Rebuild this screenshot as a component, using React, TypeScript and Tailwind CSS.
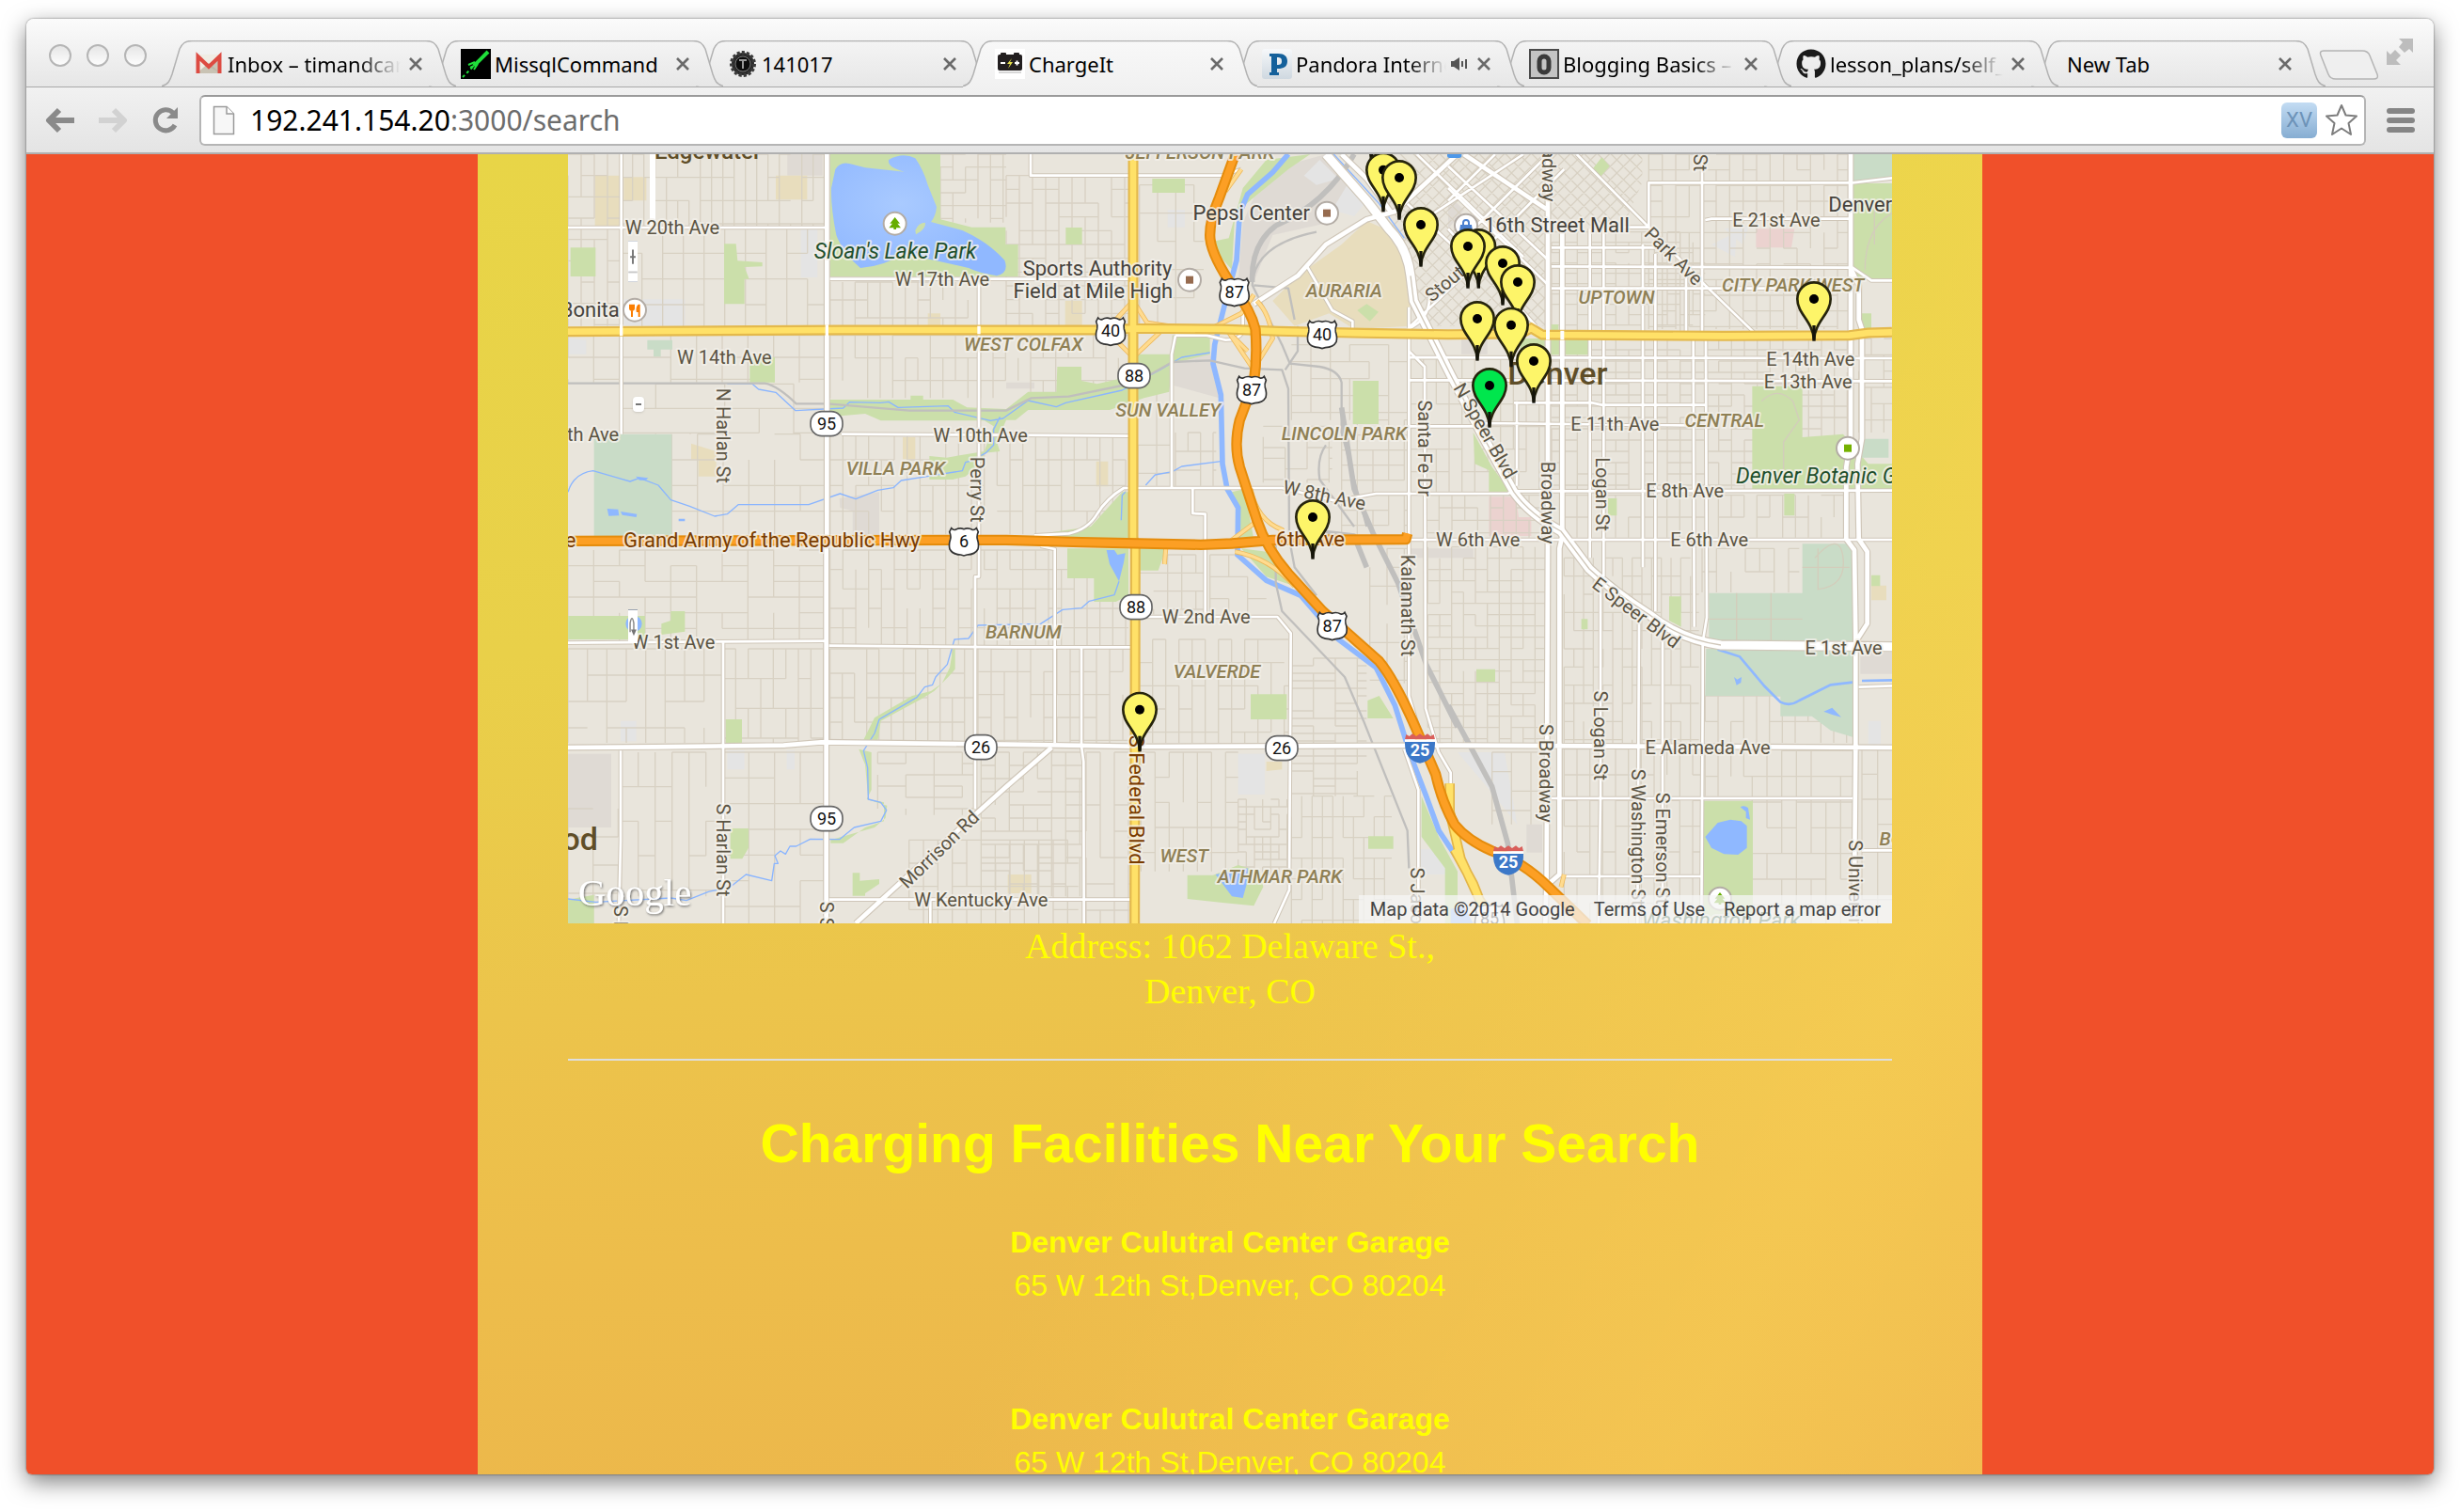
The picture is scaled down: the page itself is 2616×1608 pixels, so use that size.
import React from 'react';
import { FaGithub } from 'react-icons/fa';

/* ---------- browser chrome ---------- */

const GmailIcon = () => (
  <svg viewBox="0 0 32 32" className="h-8 w-8">
    <rect x="3" y="6" width="26" height="20" fill="#efece4" />
    <path d="M3 26 L16 15 L29 26Z" fill="#c9c3b4" />
    <path d="M16 19 L29 7 V26Z" fill="#b9b4a4" opacity=".7" />
    <path d="M4.500 26 V8 L16 19 L27.500 8 V26" fill="none" stroke="#dd4b42" strokeWidth="4" />
  </svg>
);

const MissileIcon = () => (
  <svg viewBox="0 0 32 32" className="h-8 w-8">
    <rect width="32" height="32" fill="#000" />
    <g stroke="#1fe03a" fill="none">
      <path d="M14 18 L29 3" strokeWidth="4" />
      <path d="M8 17 L15 14 M14 22 L18 16 M10 20 L14 18" strokeWidth="2" />
      <path d="M2 30 L13 19" strokeWidth="2" strokeDasharray="3 3" />
    </g>
  </svg>
);

const TuringIcon = () => (
  <svg viewBox="0 0 32 32" className="h-8 w-8">
    <circle cx="16" cy="16" r="12" fill="#2a2a2a" stroke="#3a3a3a" strokeWidth="4" strokeDasharray="3 2" />
    <circle cx="16" cy="16" r="8" fill="#0c0c0c" stroke="#777" strokeWidth="1" />
    <path d="M12 12 H20 M16 12 V21" stroke="#999" strokeWidth="2" />
  </svg>
);

const BatteryIcon = () => (
  <svg viewBox="0 0 32 32" className="h-8 w-8">
    <rect width="32" height="32" fill="#fff" />
    <rect x="6" y="4" width="6" height="3" rx="1" fill="#231f20" />
    <rect x="20" y="4" width="6" height="3" rx="1" fill="#231f20" />
    <rect x="3" y="6" width="26" height="17" rx="2" fill="#231f20" />
    <path d="M6 15 H11 M21 15 H26 M23.500 12.500 V17.500" stroke="#fff" strokeWidth="2" />
    <path d="M18 10 L13 16 H16 L14 21 L19 14 H16Z" fill="#e6e04b" />
    <rect x="4" y="24" width="24" height="2" fill="#d8d8d8" />
  </svg>
);

const PandoraIcon = () => (
  <svg viewBox="0 0 32 32" className="h-8 w-8">
    <defs>
      <linearGradient id="pandora" x1="0" y1="0" x2="0" y2="1">
        <stop offset="0" stopColor="#f6f8fa" />
        <stop offset="1" stopColor="#cfd8e0" />
      </linearGradient>
    </defs>
    <rect width="32" height="32" rx="3" fill="url(#pandora)" />
    <path d="M8 5 H17 C24 5 27 8 27 13 C27 19 23 21 17 21 H16 V25 H18 V28 H8 V25 H10 V8 H8Z M16 9 V17 C20 17 21 16 21 13 C21 10 20 9 16 9Z" fill="#14609b" fillRule="evenodd" />
  </svg>
);

const OctetIcon = () => (
  <svg viewBox="0 0 32 32" className="h-8 w-8">
    <rect x="1" y="1" width="30" height="30" fill="#c4c4c4" stroke="#4a4a4a" strokeWidth="2" />
    <rect x="11" y="8" width="10" height="17" rx="5" fill="none" stroke="#3a3a3a" strokeWidth="5" />
  </svg>
);

const SpeakerIcon = () => (
  <svg viewBox="0 0 20 16" className="h-4 w-5 shrink-0">
    <path d="M1 5 H4 L10 1 V15 L4 11 H1Z" fill="#555" />
    <path d="M13 5 V11 M17 3 V13" stroke="#555" strokeWidth="2" />
  </svg>
);

type TabInfo = { title: string; icon?: React.ReactNode; active?: boolean; audio?: boolean; fade?: boolean; z: string };

const tabs: TabInfo[] = [
  { title: 'Inbox – timandcarr', icon: <GmailIcon />, fade: true, z: 'z-[8]' },
  { title: 'MissqlCommand', icon: <MissileIcon />, z: 'z-[7]' },
  { title: '141017', icon: <TuringIcon />, z: 'z-[6]' },
  { title: 'ChargeIt', icon: <BatteryIcon />, active: true, z: 'z-[9]' },
  { title: 'Pandora Internet', icon: <PandoraIcon />, audio: true, fade: true, z: 'z-[4]' },
  { title: 'Blogging Basics – H', icon: <OctetIcon />, fade: true, z: 'z-[3]' },
  { title: 'lesson_plans/self_', icon: <FaGithub className="h-8 w-8 text-[#1b1b1b]" />, fade: true, z: 'z-[2]' },
  { title: 'New Tab', z: 'z-[1]' },
];

const TAB_EDGE = 'M0 48.500 C7 47 9 42 11 36 L19 9 C22 3 25 .5 32 .5 H281 C288 .5 291 3 294 9 L302 36 C304 42 306 47 313 48.500';

function Tab({ tab }: { tab: TabInfo }) {
  return (
    <div className={`relative h-full min-w-0 flex-1 ${tab.z}`}>
      <svg viewBox="0 0 313 50" preserveAspectRatio="none" className="absolute left-0 top-0 h-[50px] w-[calc(100%+29px)]">
        <defs>
          <linearGradient id="tabFill" x1="0" y1="0" x2="0" y2="1">
            <stop offset="0" stopColor="#f4f4f4" />
            <stop offset="1" stopColor="#e7e7e7" />
          </linearGradient>
          <linearGradient id="tabActive" x1="0" y1="0" x2="0" y2="1">
            <stop offset="0" stopColor="#f8f8f8" />
            <stop offset="1" stopColor="#f1f1f1" />
          </linearGradient>
        </defs>
        <path d={TAB_EDGE + (tab.active ? ' V50 H0Z' : 'Z')} fill={tab.active ? 'url(#tabActive)' : 'url(#tabFill)'} />
        <path d={TAB_EDGE} fill="none" stroke="#b2b2b2" strokeWidth="1.5" />
      </svg>
      <div className="relative flex h-full items-center gap-1 pl-[34px] pr-1.5">
        {tab.icon}
        <span
          className={`min-w-0 flex-1 overflow-hidden whitespace-nowrap text-[22px] leading-8 text-black ${
            tab.icon ? '' : 'pl-1'
          } ${tab.fade ? '[mask-image:linear-gradient(to_right,black_75%,transparent)]' : ''}`}
        >
          {tab.title}
        </span>
        {tab.audio && <SpeakerIcon />}
        <button aria-label={`Close ${tab.title}`} className="ml-1 h-4 w-4 shrink-0">
          <svg viewBox="0 0 16 16" className="h-4 w-4">
            <path d="M2 2 L14 14 M14 2 L2 14" stroke="#6a6a6a" strokeWidth="2.6" />
          </svg>
        </button>
      </div>
    </div>
  );
}

function TabStrip() {
  return (
    <div className="flex h-[73px] items-end bg-gradient-to-b from-[#fbfbfb] to-[#e6e6e6] shadow-[inset_0_-1px_0_#a9a9a9]">
      <div className="mb-[22px] ml-6 flex w-[120px] shrink-0 gap-4">
        {['Close window', 'Minimize window', 'Zoom window'].map((n) => (
          <button key={n} aria-label={n} className="h-6 w-6 rounded-full border-2 border-[#b5b5b5] bg-gradient-to-b from-[#e6e6e6] to-[#fdfdfd]" />
        ))}
      </div>
      <div className="flex h-[50px] max-w-[2272px] flex-1">
        {tabs.map((t) => (
          <Tab key={t.title} tab={t} />
        ))}
      </div>
      <button aria-label="New tab" className="mb-2 ml-[22px] h-8 w-16 shrink-0">
        <svg viewBox="0 0 64 32" className="h-8 w-16">
          <path d="M5 1 H46 Q52 1 54 6 L62 26 Q64 31 58 31 H18 Q12 31 10 26 L2 6 Q0 1 5 1Z" fill="#efefef" stroke="#b4b4b4" strokeWidth="1.5" />
        </svg>
      </button>
      <button aria-label="Full screen" className="mb-6 ml-2 mr-5 h-7 w-7 shrink-0">
        <svg viewBox="0 0 28 28" className="h-7 w-7" fill="#bdbdbd">
          <path d="M13 0 H28 V15 L24 11 L19 15 L13 9 L17 4Z" />
          <path d="M0 13 L4 17 L9 12 L15 18 L10 23 L15 28 H0Z" />
        </svg>
      </button>
    </div>
  );
}

function Toolbar() {
  return (
    <div className="flex h-[71px] items-center border-b-2 border-[#b0b0b0] bg-gradient-to-b from-[#f1f1f1] to-[#e4e4e4] pl-5 pr-5">
      <button aria-label="Back" className="h-8 w-8">
        <svg viewBox="0 0 32 32" className="h-8 w-8">
          <path d="M15 5 L4 16 L15 27 M5 16 H31" fill="none" stroke="#8a8a8a" strokeWidth="6" strokeLinejoin="round" />
        </svg>
      </button>
      <button aria-label="Forward" className="ml-6 h-8 w-8">
        <svg viewBox="0 0 32 32" className="h-8 w-8">
          <path d="M17 5 L28 16 L17 27 M27 16 H1" fill="none" stroke="#d2d2d2" strokeWidth="6" strokeLinejoin="round" />
        </svg>
      </button>
      <button aria-label="Reload" className="ml-6 h-8 w-8">
        <svg viewBox="0 0 32 32" className="h-8 w-8">
          <path d="M26 21 A11 11 0 1 1 24 8" fill="none" stroke="#8a8a8a" strokeWidth="5" />
          <path d="M29 2 V14 H17Z" fill="#8a8a8a" />
        </svg>
      </button>
      <div className="ml-5 flex h-[54px] flex-1 items-center rounded-md border-2 border-[#b5b5b5] border-t-[#9a9a9a] bg-white pl-3 pr-1.5">
        <svg viewBox="0 0 24 32" className="h-8 w-6">
          <path d="M1.500 1.500 H15 L22.500 9 V30.500 H1.500Z" fill="#f7f7f7" stroke="#9b9b9b" strokeWidth="1.5" />
          <path d="M15 1.500 V9 H22.500" fill="#fff" stroke="#9b9b9b" strokeWidth="1.5" />
        </svg>
        <a href="#search" className="ml-4 flex-1 text-[30px] leading-9 text-black">
          192.241.154.20<span className="text-[#6d6d6d]">:3000/search</span>
        </a>
        <button className="h-[38px] w-[38px] rounded-md bg-gradient-to-b from-[#c3dcf3] to-[#86add2] font-[Roboto] text-[22px] leading-9 text-[#6d93b8]">XV</button>
        <button aria-label="Bookmark" className="ml-2 h-9 w-9">
          <svg viewBox="0 0 36 36" className="h-9 w-9">
            <path d="M18 2 L22.500 12.500 L34 13.500 L25.500 21 L28 33 L18 26.500 L8 33 L10.500 21 L2 13.500 L13.500 12.500Z" fill="#fff" stroke="#7d7d7d" strokeWidth="2" strokeLinejoin="round" />
          </svg>
        </button>
      </div>
      <button aria-label="Menu" className="ml-[22px] flex flex-col gap-1">
        <span className="h-1.5 w-[30px] rounded-sm bg-[#858585]" />
        <span className="h-1.5 w-[30px] rounded-sm bg-[#858585]" />
        <span className="h-1.5 w-[30px] rounded-sm bg-[#858585]" />
      </button>
    </div>
  );
}

/* ---------- map ---------- */

// Neighbourhood street grids: x0, y0, x1, y1, block width, block height
const blocks: number[][] = [
  [12, 12, 182, 560, 42, 68], [182, 12, 838, 246, 36, 74], [182, 246, 838, 560, 66, 82], [848, 420, 1323, 560, 40, 57],
  [1200, 12, 1410, 230, 40, 41], [1410, 80, 1800, 560, 42, 44], [12, 590, 838, 740, 82, 70], [182, 745, 838, 905, 110, 78],
  [848, 590, 1800, 790, 40, 72], [343, 905, 838, 1230, 82, 82], [848, 905, 1810, 1225, 41, 82], [1835, 110, 2040, 560, 58, 90],
  [1830, 760, 1940, 1070, 60, 90], [1950, 900, 2080, 1070, 40, 60], [12, 1275, 838, 1565, 82, 50], [848, 1275, 1800, 1580, 41, 62],
  [12, 1590, 507, 1890, 62, 84], [507, 1590, 838, 1890, 40, 95], [848, 1590, 1310, 1890, 39, 78], [1320, 1590, 1810, 1890, 42, 73],
  [182, 1920, 507, 2380, 54, 110], [507, 1920, 838, 2466, 82, 82], [1000, 1920, 1310, 2120, 90, 36], [1330, 1920, 1650, 2380, 45, 42],
  [1100, 2200, 1640, 2466, 46, 74], [1665, 1920, 1815, 2466, 45, 84], [12, 2100, 180, 2466, 80, 90], [1835, 1290, 2045, 1480, 45, 58],
  [1835, 1560, 2310, 1890, 42, 74], [1840, 1920, 2150, 2300, 45, 80], [2150, 2070, 2310, 2330, 26, 24], [2320, 1620, 2560, 2060, 70, 24],
  [2320, 2060, 2640, 2466, 33, 66], [2060, 1290, 2240, 1480, 60, 70], [2230, 880, 2450, 1060, 70, 34], [2320, 620, 2690, 860, 62, 54],
  [2480, 860, 2690, 1230, 50, 48], [2700, 665, 3140, 1090, 41, 72], [3150, 260, 3640, 575, 41, 33], [3460, 12, 4100, 570, 43, 50],
  [3150, 600, 4100, 1080, 41, 36], [2750, 1100, 3130, 1235, 41, 40], [3190, 1100, 4090, 1235, 41, 70], [4130, 600, 4236, 900, 40, 52],
  [2755, 1265, 3130, 1890, 38, 36], [3190, 1300, 3620, 1890, 31, 58], [3630, 1270, 3940, 1410, 46, 74], [3640, 1740, 4110, 1890, 41, 82],
  [3190, 1910, 3630, 2466, 41, 82], [3790, 1915, 4110, 2466, 47, 82], [4140, 1910, 4236, 2466, 50, 80], [3640, 1915, 3790, 2060, 41, 82],
  [2960, 1920, 3130, 2150, 62, 62], [2570, 1270, 2690, 1700, 55, 60],
];

function gridPath(): string {
  let seed = 7;
  const rnd = () => {
    seed = (seed * 16807) % 2147483647;
    return seed / 2147483647;
  };
  let d = '';
  for (const [x0, y0, x1, y1, dx, dy] of blocks) {
    for (let x = x0; x < x1; x += dx)
      for (let y = y0; y < y1; y += dy) {
        if (rnd() > 0.15) d += `M${x} ${y}V${Math.min(y + dy, y1)}`;
        if (rnd() > 0.3) d += `M${x} ${y}H${Math.min(x + dx, x1)}`;
      }
  }
  return d;
}

const downtownPath = (step: number, from: number, to: number) => {
  let d = '';
  for (let c = from; c < to; c += step) d += `M${c} -200L${c + 900} 700M${c + 1300} -200L${c + 400} 700`;
  return d;
};

const parks = [
  'M848 12H1200V220L1300 245H1408V300H1440V402H848Z',
  'M20 310H100V402H20Z', 'M510 298H548L553 352L632 357V370L575 372L590 410H575V490H510Z', 'M592 660H672V740H592Z',
  'M848 795H1105V782H1145V795H1240L1285 820L1410 825L1480 770L1570 770L1573 690H1650V735L1700 745L1810 720V650H1940V590H2060V650L1940 680L1930 770L1850 790L1740 828L1480 828L1440 860H1410L1380 930L1390 960L1340 965L1330 1000L1280 1040L1240 1050L1165 1050V975L1220 980L1340 960L1370 880L1340 862H1010L960 840L848 850Z',
  'M1876 90H1980V135H1876Z', 'M1600 246H1652V300H1600Z', 'M1410 300H1448V402H1410Z', 'M2165 120L2240 30L2380 12L2310 60L2200 150L2140 200L2130 380L2085 330L2070 290L2120 280Z',
  'M2516 735H2598V873H2516Z', 'M2530 510L2560 490L2598 515L2570 545Z', 'M1510 1225L1680 1200L1780 1090H1808V1240H1510Z',
  'M1605 1270H1800V1420L1760 1440H1690V1365H1605Z', 'M1835 1270H1920L1895 1340H1835Z', 'M12 1485H258V1560H12Z', 'M340 1470H385V1535L310 1545V1510L340 1500Z',
  'M1240 1590L1230 1650L1205 1700L1170 1725L1110 1740L990 1810L955 1880L1000 1885L1010 1820L1140 1750L1180 1725L1225 1680L1247 1655V1590Z',
  'M940 1910L980 1920V2040L965 2070L1030 2090L1025 2130L990 2160L850 2200L850 2210L890 2210L960 2160L1020 2140V2080L970 2070L960 1960Z',
  'M515 1815H567V1890H515Z', 'M530 2163H588V2225L568 2260H530Z', 'M920 2305H943V2330L1005 2325V2340L960 2370V2378H920Z', 'M12 2390L95 2375V2466H12Z',
  'M2190 1735H2305V1815H2190Z', 'M2563 1755L2600 1740L2645 1812H2563Z', 'M2565 2188H2645V2228H2565Z', 'M1988 2312H2070L2150 2280L2220 2300L2230 2350L2200 2410L2100 2400L1988 2388Z',
  'M2735 2060L2790 2190L2850 2300V2466H2810V2290L2735 2190Z', 'M2900 900L2960 1010L3020 1090H2950V1020L2905 1000Z', 'M3050 600H3268V652H3050Z',
  'M3148 555H3172V650H3148Z', 'M3280 60L3310 22L3335 50L3300 90Z', 'M3790 752H3950V915L4080 905L4160 1000H4236V1080H3790Z', 'M4110 105H4236V410H4130L4110 370Z',
  'M4130 520H4170V570H4130Z', 'M3892 1095H3925V1165H3892Z', 'M3525 1423H3563V1520L3525 1500Z', 'M3330 1110H3358V1165H3330Z', 'M2910 1655H2970V1695H2910Z', 'M3245 1495H3265V1528H3245Z',
  'M3635 2075H3792V2466H3635Z', 'M2130 1090L2170 1080L2200 1240H2150L2148 1140Z', 'M2160 1270L2240 1280L2330 1390L2240 1360Z', 'M4170 1355H4198V1390H4170Z',
];
const cemeteries = ['M95 905H343V1230H95Z', 'M4110 12H4236V90L4110 105Z', 'M3950 1255H4110V1565H3652V1412H3950Z', 'M3643 1590H4112V1872L4040 1850L3980 1805H3880V1740H3640Z', 'M4130 920H4225V980H4130Z', 'M265 605H345V635H308V658H285V635H265Z'];
const tans = ['M98 80H176V240H98Z', 'M190 85H262V160H190Z', 'M675 80H775V157H675Z', 'M405 935L485 960V1040H428V985H405Z', 'M1080 915H1120V985H1080Z', 'M1598 480H1652V560H1598Z', 'M2340 400L2480 300L2560 225L2640 260L2690 340L2700 560L2520 570L2440 520L2330 560L2260 480Z', 'M1697 992H1735V1072H1697Z', 'M1415 2310H1490V2370H1415Z', 'M1160 520H1200V560H1160Z', 'M2240 1950H2290V1975L2240 1980Z', 'M4170 1388H4218V1435H4170Z'];
const greys = ['M712 12H824V80H712Z', 'M1945 670L2060 640L2090 790L1945 750Z', 'M2200 150L2330 40L2430 12L2520 80L2440 230L2260 270L2200 420L2150 420L2165 230Z', 'M878 1110L1005 1090V1230H920V1150L880 1140Z', 'M12 1925H150V2160H12Z', 'M4135 1600H4236V1670H4135Z', 'M2862 590H2945V650H2862Z', 'M2820 140L2870 190L2820 250Z', 'M2700 1270L2900 1270L2900 1300H2700Z', 'M3070 2150H3120V2240H3070Z', 'M1410 740H1500V760H1410Z'];
const lights = ['M190 475H385V560H190Z', 'M755 252H808V405H755Z', 'M12 600L70 605V650H12Z', 'M2360 80L2410 30L2470 90L2400 110Z', 'M2510 90L2570 150L2520 210L2450 190Z', 'M2150 1925H2235V2055H2150Z', 'M2850 1920H3000L3040 2150L2960 2050Z', 'M180 1820H230V1885H180Z', 'M520 1915H575V1975H520Z', 'M710 1915H735V1975H710Z', 'M2720 2230H2815V2310H2720Z', 'M4160 1820H4200V1900H4160Z', 'M3660 300L3740 260L3735 340Z', 'M3700 250L3780 240L3760 300Z', 'M1925 190H1980V245H1925Z', 'M2440 380L2480 420L2460 440L2420 400Z'];
const reds = ['M3802 250H3925L3915 310H3802Z', 'M2950 1105H3035L3045 1170H3085V1230H2950Z'];

const streams = [
  'M520 745H600L620 762L675 772L738 830L890 822L910 803L1010 805L1035 802L1065 820L1225 815L1245 835L1360 862L1400 855L1480 798L1570 818L1600 805L1780 765L1900 700L1970 660L2060 645',
  'M12 1090Q30 1030 92 1022L210 1056L240 1045L300 1068L340 1115L400 1135L480 1167L520 1160L555 1130L780 1130L880 1095L930 1112L1000 1084L1050 1076L1075 1053L1270 1022L1280 995L1300 990L1345 965L1370 940L1370 890L1390 850',
  'M1770 1375L1755 1418L1675 1438L1650 1460L1590 1465L1520 1510L1320 1515L1290 1557L1245 1560L1222 1640L1185 1680L1175 1705L1150 1712L1125 1745L1005 1815L990 1860L955 1915L968 1970L970 2070L1010 2080L1028 2105L1010 2140L925 2160L878 2198L785 2197L740 2220L720 2220L706 2245L690 2235L672 2250L682 2275L670 2275L662 2330L580 2310L530 2350L460 2365L390 2393L340 2385L100 2398L12 2388',
  'M1855 1068L1885 1035L1940 1025L1970 1008L2095 992', 'M1790 1090L1780 1100L1777 1180', 'M2455 12L2600 170L2680 280',
];
const lakes = [
  'M228 1040L268 1045L260 1052L240 1052Z', 'M137 1143L172 1145L175 1165L142 1166Z', 'M180 1152L232 1160L230 1170L185 1163Z', 'M365 1175H385V1183H365Z',
  'M1730 1275L1755 1275L1765 1290L1790 1285L1785 1315L1770 1375L1740 1320Z', 'M2078 2310L2180 2290L2180 2330L2165 2385L2130 2380Z', 'M3640 2190L3680 2145L3720 2135L3755 2140L3773 2155V2225L3745 2247L3700 2245L3660 2225Z',
  'M3752 2095Q3765 2088 3777 2098L3783 2135L3770 2130L3770 2110Z', 'M3732 1680L3742 1688L3756 1680L3754 1698L3740 1706Z', 'M4018 1790L4045 1778L4074 1808L4045 1800Z', 'M196 1510A26 26 0 0 1 248 1510A26 26 0 0 1 196 1510Z', 'M2828 2420L2870 2410L2900 2466H2828Z',
];

const rails = [
  'M12 743H640Q680 750 740 808H840L1100 830H1410L1490 790L1610 785L1780 750L1870 715L1940 675L2060 670L2170 695L2290 700L2310 760L2313 1240L2330 1330L2400 1420',
  'M2400 260Q2200 300 2195 430L2290 620L2315 680L2410 690Q2470 700 2480 740V900L2560 1200',
  'M2270 1260V1380L2290 1470L2490 1680L2550 1820L2690 2170L2695 2290', 'M2340 560V640L2300 700', 'M2200 430L2310 440L2330 540', 'M2430 940Q2400 980 2410 1050L2520 1200',
];
const thickRails = ['M2520 12Q2430 170 2270 240Q2190 300 2195 420', 'M2480 820L2520 1080L2580 1220L2660 1380L2750 1640L2850 1840', 'M2820 1770L2960 2030L3010 2210L3040 2466', 'M2430 1220L2520 1230L2560 1330'];

const minor = [
  'M182 12V905', 'M12 246H835', 'M848 410H1805', 'M1323 420V1360H1311V2100', 'M885 905L1440 908L1810 911', 'M1488 12V80H2100L2160 60', 'M180 1915V2200L174 2466',
  'M2370 370L2450 510L2515 545V575', 'M1950 590H2050L2110 605Q2150 605 2165 580V510', 'M1950 590L1938 650V1075', 'M1500 1228L1610 1222Q1670 1210 1700 1160T1785 1077H2290L2460 1118L2590 1095H3010L3030 1087L4236 1085',
  'M2005 1077V1158L2045 1160V1488', 'M1830 1488H2275L2318 1540L2313 2360L2265 2466', 'M2695 500V1740L2730 1860', 'M2695 640L2745 690L2748 1780L2790 1920L2828 1985V2040', 'M2680 1910L2725 2040V2466',
  'M2695 660L4236 663', 'M2695 733L4236 736', 'M2695 880L2900 880L2930 870L3650 878', 'M3030 805H3280L3310 812H3640', 'M12 1571L380 1568L835 1565', 'M845 1580L1440 1585H1810', 'M507 1570V2466', 'M845 2390H1810', 'M1168 2390V2466',
  'M1520 1262L1565 1272V1890', 'M1650 1584V1900L1657 1950L1658 2466', 'M3272 250V1300', 'M3316 250V1360', 'M3441 300V1330', 'M3481 330V1470', 'M3579 380V580', 'M3630 12V580', 'M3602 600L3605 1520', 'M3642 600L3645 1490L3632 1570V1740L3628 2466',
  'M3460 245V103H4110L4236 88', 'M3380 245H3460', 'M3150 310H3480', 'M3150 370L4110 374L4170 415H4236', 'M3150 440H3920', 'M3640 222L3660 218H4100', 'M3230 12L3460 245L3640 430L3795 580', 'M2690 1242H4236', 'M3306 1360V2060L3300 2466', 'M3429 1510L3424 2466', 'M3504 1550V2466',
  'M3150 2067H4110', 'M3180 2316H3628', 'M4140 2233H4236', 'M4236 1708L4130 1712', 'M3039 800V1070', 'M2820 120L3140 430', 'M2820 50L3140 350', 'M2820 250L3100 560', 'M3190 60L2960 290', 'M3140 12L2880 270', 'M3060 12L2700 250', 'M2970 12L2820 160', 'M2690 170L2820 290L2900 370L2700 560', 'M2720 12L3060 340', 'M2830 420L2760 470Q2760 540 2690 570',
];
const major = ['M838 12V1225L836 1270V2466', 'M12 1905L290 1903L700 1898L820 1888L1410 1895L1870 1902L2820 1898L4236 1905', 'M3138 12V1230L3134 2310L3130 2466', 'M3184 240V1230L3175 1270V2310L3140 2340', 'M4104 12V920L4090 1010V1240L4116 1275L4120 1550V1900L4115 2466', 'M4104 375L4130 430V540L4140 570V920L4126 1000L4130 1240L4157 1280V1510L4125 1560', 'M930 2466L1310 2120L1410 2030L1555 1905', 'M2200 490L2340 400L2430 300L2560 220L2650 195L2710 140L2840 20', 'M2870 12L3138 190', 'M2480 12L2560 90L2640 200'];
const speer = 'M2430 12L2560 160L2630 250Q2690 310 2700 400L2710 480L2830 720L2930 910L3030 1090Q3080 1160 3180 1215L3270 1335Q3350 1410 3460 1480Q3560 1560 3690 1578L4236 1583';
const colfax = 'M12 578L880 573H1690L1830 568L2100 570L2280 577L2550 583L2820 587L3050 585L3085 567L3120 588L3700 592L4100 590L4160 582L4236 580';
const federal = 'M1815 12V1235L1822 1270L1820 2466';
const sixth = 'M12 1246L1410 1243L1650 1250L2030 1258L2130 1254L2260 1243L2685 1241L2690 1222';
const i25 = 'M2140 12L2090 150Q2060 220 2060 270Q2060 330 2140 445Q2190 510 2205 570Q2212 660 2200 740L2155 860Q2135 940 2155 1010L2210 1180Q2240 1270 2310 1350L2420 1470L2600 1630Q2650 1690 2720 1850L2780 1990Q2800 2080 2840 2150Q2880 2200 2960 2235Q3060 2270 3140 2350L3265 2470';
const platte = 'M2310 12L2260 70L2180 140L2155 200L2145 350L2110 480L2075 620L2070 680L2095 780L2100 1000L2115 1080L2150 1140L2148 1290L2240 1372L2350 1420L2470 1560L2590 1650L2650 1770L2700 1930L2750 2060L2790 2170L2850 2260L2950 2430';
const ramps = ['M1815 480L1760 540L1690 575M1815 480L1860 550L1960 565M1740 585L1815 660L1900 580M2060 570L2160 520L2200 460M2120 580L2200 700M2180 640L2120 580M2210 480Q2250 520 2260 600L2210 680M2160 60L2110 130', 'M2190 1080Q2210 1180 2290 1210L2260 1260M2120 1250L2200 1190M2140 1280Q2250 1300 2330 1390M1920 1260L1915 1320', 'M3190 2310L3180 2350', 'M2640 1700L2720 1830'];
const santaFe = 'M2825 2020V2110L2860 2260L2920 2390L2980 2480M2840 2230L2900 2340L2950 2466';

type Kind = 'road' | 'poi' | 'hood' | 'green' | 'hwy';
const labelStyle: Record<Kind, { fill: string; size: number; cls: string }> = {
  road: { fill: '#5b5443', size: 60, cls: '' },
  poi: { fill: '#45423c', size: 66, cls: '' },
  hood: { fill: '#8f8055', size: 60, cls: 'italic font-medium' },
  green: { fill: '#1f4f2c', size: 69, cls: 'italic' },
  hwy: { fill: '#7a3c00', size: 66, cls: '' },
};

// text, centre x, baseline y (or centre y when rotated), kind, rotation
const labels: [string, number, number, Kind, number?][] = [
  ['W 20th Ave', 345, 267, 'road'], ["Sloan's Lake Park", 1056, 345, 'green'], ['W 17th Ave', 1206, 432, 'road'],
  ['La Bonita', 38, 532, 'poi'], ['W 14th Ave', 511, 680, 'road'], ['N Harlan St', 507, 910, 'road', 90], ['11th Ave', 58, 927, 'road'],
  ['W 10th Ave', 1328, 929, 'road'], ['WEST COLFAX', 1465, 640, 'hood'], ['VILLA PARK', 1057, 1035, 'hood'], ['Perry St', 1318, 1082, 'road', 90],
  ['Grand Army of the Republic Hwy', 662, 1266, 'hwy'], ['e', 20, 1266, 'hwy'], ['JEFFERSON PARK', 2028, 27, 'hood'], ['Pepsi Center', 2192, 222, 'poi'],
  ['Sports Authority', 1701, 400, 'poi'], ['Field at Mile High', 1687, 472, 'poi'], ['AURARIA', 2488, 467, 'hood'], ['SUN VALLEY', 1926, 848, 'hood'],
  ['LINCOLN PARK', 2488, 925, 'hood'], ['Santa Fe Dr', 2745, 950, 'road', 90], ['W 8th Ave', 2425, 1100, 'road', 12], ['6th Ave', 2380, 1263, 'hwy'],
  ['Broadway', 3140, 32, 'road', 90], ['York St', 3625, -28, 'road', 90], ['16th Street Mall', 3166, 262, 'poi'], ['Park Ave', 3540, 337, 'road', 45],
  ['E 21st Ave', 3867, 243, 'road'], ['Denver Zoo', 4200, 195, 'poi'], ['CITY PARK WEST', 3920, 450, 'hood'], ['UPTOWN', 3357, 490, 'hood'],
  ['E 14th Ave', 3976, 688, 'road'], ['E 13th Ave', 3968, 759, 'road'], ['E 11th Ave', 3352, 895, 'road'], ['CENTRAL', 3701, 883, 'hood'],
  ['Denver Botanic Gardens', 4096, 1062, 'green'], ['E 8th Ave', 3575, 1108, 'road'], ['E 6th Ave', 3653, 1264, 'road'], ['W 6th Ave', 2915, 1264, 'road'],
  ['N Speer Blvd', 2938, 894, 'road', 60], ['Broadway', 3138, 1124, 'road', 90], ['Logan St', 3312, 1097, 'road', 90], ['Stout St', 2836, 402, 'road', -40],
  ['W 1st Ave', 348, 1589, 'road'], ['BARNUM', 1465, 1558, 'hood'], ['S Harlan St', 507, 2232, 'road', 90], ['Morrison Rd', 1196, 2230, 'road', -44],
  ['W Kentucky Ave', 1330, 2412, 'road'], ['W 2nd Ave', 2048, 1510, 'road'], ['Kalamath St', 2692, 1452, 'road', 90], ['VALVERDE', 2082, 1682, 'hood'],
  ['S Federal Blvd', 1825, 2072, 'hwy', 90], ['WEST', 1978, 2272, 'hood'], ['ATHMAR PARK', 2283, 2336, 'hood'], ['S Jason St', 2720, 2430, 'road', 90],
  ['E Speer Blvd', 3420, 1474, 'road', 37], ['E 1st Ave', 4082, 1609, 'road'], ['S Logan St', 3305, 1867, 'road', 90], ['S Broadway', 3132, 1987, 'road', 90],
  ['E Alameda Ave', 3648, 1926, 'road'], ['S Washington St', 3426, 2192, 'road', 90], ['S Emerson St', 3505, 2227, 'road', 90], ['S University Blvd', 4120, 2420, 'road', 90],
  ['S Depew St', 180, 2560, 'road', 90], ['S Sheridan Blvd', 836, 2604, 'road', 90], ['BONNIE BRAE', 4380, 2216, 'hood'], ['Washington Park', 3690, 2480, 'green'],
];

const ovalShields: [string, number, number][] = [['95', 837, 872], ['88', 1818, 719], ['88', 1824, 1457], ['26', 1329, 1904], ['26', 2289, 1907], ['95', 837, 2132]];
const usShields: [string, number, number][] = [['40', 1743, 577], ['40', 2418, 587], ['87', 2138, 452], ['87', 2193, 764], ['87', 2450, 1517], ['6', 1275, 1248], ['85', 2952, 2450]];
const interstates: [number, number][] = [[2730, 1907], [3012, 2264]];
const pins: [number, number][] = [[2575, -100], [2613, 62], [2664, 87], [2733, 237], [2917, 306], [2883, 306], [2994, 360], [3042, 420], [2913, 537], [3021, 557], [3093, 672], [3987, 474], [2388, 1170], [1836, 1784]];

const Pin = ({ x, y, fill = '#fdf569' }: { x: number; y: number; fill?: string }) => (
  <g transform={`translate(${x} ${y})`}>
    <path d="M0 130C-4 70 -53 48 -53 0A53 53 0 0 1 53 0C53 48 4 70 0 130Z" fill={fill} stroke="#26240c" strokeWidth="8" />
    <path d="M-5 84H5V134H-5Z" fill="#15140a" />
    <circle r="15" fill="#000" />
  </g>
);

const PoiCircle = ({ x, y, children }: { x: number; y: number; children?: React.ReactNode }) => (
  <g transform={`translate(${x} ${y})`}>
    <circle r="36" fill="#fff" stroke="#b3aca5" strokeWidth="6" />
    {children}
  </g>
);

const Strokes = ({ paths, color, width }: { paths: string[]; color: string; width: number }) => (
  <path d={paths.join('')} fill="none" stroke={color} strokeWidth={width} strokeLinejoin="round" />
);

function MapDrawing() {
  return (
    <svg viewBox="12 12 4224 2454" className="block w-full font-[Roboto]" role="img" aria-label="Map of charging stations in Denver">
      <defs>
        <radialGradient id="lake" cx=".4" cy=".4" r=".6">
          <stop offset="0" stopColor="#a9caff" />
          <stop offset="1" stopColor="#90b8ff" />
        </radialGradient>
        <clipPath id="downtown">
          <path d="M2640 12H3440V100L3380 240H3140V560H2720L2700 400L2620 230Z" />
        </clipPath>
        <filter id="logoShadow" x="-10%" y="-10%" width="120%" height="130%">
          <feDropShadow dx="3" dy="4" stdDeviation="3" floodColor="#555" floodOpacity=".8" />
        </filter>
      </defs>
      <rect x="12" y="12" width="4224" height="2454" fill="#e9e5dc" />
      <path d={greys.join('')} fill="#dfdad4" />
      <path d={lights.join('')} fill="#e4e4e4" />
      <path d={tans.join('')} fill="#e8ddbd" />
      <path d={reds.join('')} fill="#ebd2cf" />
      <path d={gridPath()} fill="none" stroke="#d8d1c3" strokeWidth="4" />
      <g clipPath="url(#downtown)">
        <path d={downtownPath(42, 1700, 3500)} fill="none" stroke="#d8d1c3" strokeWidth="4" />
      </g>
      <path d={parks.join('')} fill="#cbdfaa" />
      <path d={cemeteries.join('')} fill="#c9dcc7" />
      <path d="M3950 1330H4100M3652 1495H3950M3740 1412V1565M3850 1412V1565M4000 1270V1400Q4090 1390 4080 1300T3990 1300M3820 800Q3870 750 3920 800L3940 860L3890 930V1060M4180 180V300M4150 380Q4150 250 4236 200" fill="none" stroke="#d3cdbb" strokeWidth="4" />
      <path d="M865 60Q880 35 910 42L960 55L1085 68Q1030 55 1035 30Q1080 5 1120 25Q1145 60 1160 110L1188 180Q1185 210 1170 228L1270 255Q1350 290 1405 350Q1420 390 1380 400Q1320 390 1290 375L1180 350L1080 330Q1020 370 945 375Q890 330 868 270Q850 180 852 120Z" fill="url(#lake)" />
      <path d="M1120 255Q1130 230 1152 230Q1155 250 1122 268Z" fill="#cbdfaa" />
      <path d={lakes.join('')} fill="#8fb8ff" />
      <Strokes paths={streams} color="#8ab5ff" width={4} />
      <path d="M3680 1592L3750 1615L3830 1710L3880 1760Q3910 1775 3940 1755L4040 1705L4110 1697M4140 1692L4236 1690" fill="none" stroke="#8fb8ff" strokeWidth="8" />
      <path d={platte} fill="none" stroke="#8fb8ff" strokeWidth="17" />
      <Strokes paths={rails} color="#c0bfbd" width={7} />
      <Strokes paths={thickRails} color="#c0bfbd" width={17} />

      <Strokes paths={minor} color="#cfc6b8" width={14} />
      <Strokes paths={major} color="#cfc6b8" width={21} />
      <path d={speer} fill="none" stroke="#cfc6b8" strokeWidth="34" />
      <Strokes paths={minor} color="#fff" width={8} />
      <Strokes paths={major} color="#fff" width={14} />
      <path d={speer} fill="none" stroke="#fff" strokeWidth="27" />
      <path d="M2700 400L2710 480L2830 720L2930 910L3030 1090Q3080 1160 3180 1215L3270 1335Q3350 1410 3460 1480Q3560 1560 3690 1578" fill="none" stroke="#cfc6b8" strokeWidth="4" />
      <rect x="273" y="12" width="18" height="230" fill="#fff" />

      <Strokes paths={ramps} color="#edb95c" width={15} />
      <Strokes paths={ramps} color="#ffdb8f" width={10} />
      <path d={santaFe} fill="none" stroke="#e3b548" strokeWidth="32" />
      <path d={santaFe} fill="none" stroke="#ffe168" strokeWidth="22" />
      <path d={colfax + federal} fill="none" stroke="#e4b94c" strokeWidth="33" />
      <path d={colfax + federal} fill="none" stroke="#ffe168" strokeWidth="20" />
      <path d="M182 556V592M838 556V592M1323 560V586" stroke="#fff" strokeWidth="10" />
      <path d="M3138 570V604M3184 575V604" stroke="#fff" strokeWidth="12" />
      <path d={sixth + i25} fill="none" stroke="#e58c0c" strokeWidth="34" strokeLinejoin="round" />
      <path d={sixth + i25} fill="none" stroke="#fc9f24" strokeWidth="22" strokeLinejoin="round" />

      {labels.map(([text, x, y, kind, rot], i) => {
        const s = labelStyle[kind];
        return (
          <text
            key={i}
            transform={rot ? `translate(${x} ${y}) rotate(${rot})` : `translate(${x} ${y})`}
            dy={rot ? s.size * 0.35 : 0}
            textAnchor="middle"
            fontSize={s.size}
            fill={s.fill}
            stroke="#f3f0ea"
            strokeOpacity=".8"
            strokeWidth="12"
            strokeLinejoin="round"
            paintOrder="stroke"
            className={s.cls}
          >
            {text}
          </text>
        );
      })}
      <text x="288" y="27" fontSize="72" fill="#5f4e28" className="font-medium">Edgewater</text>
      <text x="3010" y="746" fontSize="102" fill="#5f4e28" className="font-medium">Denver</text>
      <text x="108" y="2232" fontSize="102" fill="#5f4e28" textAnchor="end" className="font-medium">Lakewood</text>

      {ovalShields.map(([n, x, y], i) => (
        <g key={i} transform={`translate(${x} ${y})`}>
          <rect x="-51" y="-39" width="102" height="78" rx="36" fill="#fff" stroke="#666" strokeWidth="5" />
          <text y="18" textAnchor="middle" fontSize="54" fill="#111">{n}</text>
        </g>
      ))}
      {usShields.map(([n, x, y], i) => (
        <g key={i} transform={`translate(${x} ${y})`}>
          <path d="M-40 -43Q-34 -36 -27 -38Q-13 -46 0 -40Q13 -46 27 -38Q34 -36 40 -43L46 -31Q40 -18 43 -8Q49 10 45 24Q36 41 10 42L0 45L-10 42Q-36 41 -45 24Q-49 10 -43 -8Q-40 -18 -46 -31Z" fill="#fff" stroke="#333" strokeWidth="5" />
          <text y="18" textAnchor="middle" fontSize="54" fill="#111">{n}</text>
        </g>
      ))}
      {interstates.map(([x, y], i) => (
        <g key={i} transform={`translate(${x} ${y})`}>
          <path d="M-48 -20H48Q50 40 0 48Q-50 40 -48 -20Z" fill="#3c78c8" />
          <path d="M-48 -28L-44 -44L-34 -38L-24 -46L-12 -38L0 -46L12 -38L24 -46L34 -38L44 -44L48 -28Z" fill="#d95f5a" />
          <rect x="-48" y="-28" width="96" height="8" fill="#fff" />
          <text y="24" textAnchor="middle" fontSize="54" fill="#fff" className="font-bold">25</text>
        </g>
      ))}

      <PoiCircle x={2433} y={200}><rect x="-12" y="-12" width="24" height="24" fill="#966b4f" /></PoiCircle>
      <PoiCircle x={1995} y={413}><rect x="-12" y="-12" width="24" height="24" fill="#966b4f" /></PoiCircle>
      <PoiCircle x={4095} y={950}><rect x="-12" y="-12" width="24" height="24" fill="#74b000" /></PoiCircle>
      <PoiCircle x={1055} y={233}><path d="M0 -20L16 0H8L19 14H4V19H-4V14H-19L-8 0H-16Z" fill="#66ad00" /></PoiCircle>
      <PoiCircle x={3687} y={2387}><path d="M0 -20L16 0H8L19 14H4V19H-4V14H-19L-8 0H-16Z" fill="#66ad00" /></PoiCircle>
      <PoiCircle x={225} y={509}>
        <path d="M-15 -18V-6Q-15 0 -9 0Q-3 0 -3 -6V-18M-9 -18V22M14 -18V22M14 -16Q6 -10 8 4H14" fill="none" stroke="#fb7d00" strokeWidth="6" />
      </PoiCircle>
      <PoiCircle x={2877} y={239}>
        <path d="M-18 -2H18L21 20H-21Z" fill="#4a80d0" />
        <path d="M-9 0V-8A9 9 0 0 1 9 -8V0" fill="none" stroke="#4a80d0" strokeWidth="6" />
      </PoiCircle>
      <rect x="2817" y="0" width="46" height="24" rx="8" fill="#4e98e8" />

      {pins.map(([x, y], i) => <Pin key={i} x={x} y={y} />)}
      <Pin x={2952} y={750} fill="#00e64d" />

      <text x="44" y="2408" fontSize="123" fill="#fff" filter="url(#logoShadow)" className="font-['Liberation_Serif']">Google</text>
    </svg>
  );
}

function StationMap() {
  return (
    <div className="relative overflow-hidden">
      <MapDrawing />
      <button aria-label="Zoom in" className="absolute left-16 top-[92px] h-11 w-2.5 border-b border-t border-gray-300 bg-white">
        <svg viewBox="0 0 10 44" className="h-full w-full">
          <path d="M5 9V25M2 17H8" stroke="#757575" strokeWidth="2" />
          <path d="M0 34H10" stroke="#c8c8c8" strokeWidth="2" />
        </svg>
      </button>
      <button aria-label="Zoom out" className="absolute left-[69px] top-[258px] h-4 w-3 rounded-sm bg-white shadow">
        <svg viewBox="0 0 12 16" className="h-full w-full"><path d="M3 8H9" stroke="#757575" strokeWidth="2" /></svg>
      </button>
      <button aria-label="Rotate map" className="absolute left-16 top-[484px] h-9 w-2.5 border-t border-gray-400 bg-white">
        <svg viewBox="0 0 10 36" className="h-full w-full">
          <path d="M2 24V14Q4 4 6 14V22" fill="none" stroke="#8a8a8a" strokeWidth="1.5" />
          <path d="M3 21H9L6 28Z" fill="#757575" />
        </svg>
      </button>
      <div className="absolute bottom-0 right-0 flex h-[30px] items-center gap-5 bg-[#f5f5f5]/75 pl-3 pr-3 font-[Roboto] text-[20px] leading-[30px] text-[#444]">
        <span>Map data ©2014 Google</span>
        <a href="#terms">Terms of Use</a>
        <a href="#report">Report a map error</a>
      </div>
    </div>
  );
}

/* ---------- page ---------- */

const facilities = [
  { name: 'Denver Culutral Center Garage', address: '65 W 12th St,Denver, CO 80204' },
  { name: 'Denver Culutral Center Garage', address: '65 W 12th St,Denver, CO 80204' },
];

export default function App() {
  return (
    <div className="h-screen overflow-hidden bg-white px-7 pb-10 pt-5">
      <div className="flex h-full flex-col overflow-hidden rounded-t-lg rounded-b-md font-['Noto_Sans',sans-serif] shadow-[0_8px_24px_rgba(0,0,0,0.5),0_0_2px_rgba(0,0,0,0.6)]">
        <TabStrip />
        <Toolbar />
        <main className="flex-1 overflow-hidden bg-[#f0502a]">
          <div className="mx-auto min-h-full w-[1600px] max-w-full bg-[linear-gradient(115deg,transparent_50%,rgba(255,216,92,0.4)_85%,rgba(255,205,92,0.3)_100%),linear-gradient(176deg,#e8d547_0%,#e9d049_35%,#ecc44b_60%,#edbd4b_78%,#ecb64b_100%)] px-24 text-center text-[#ffff00]">
            <StationMap />
            <p className="font-['Liberation_Serif',serif] text-[38px] leading-[48px]">
              Address: 1062 Delaware St.,
              <br />
              Denver, CO
            </p>
            <hr className="mt-12 border-t-2 border-[#dedede]" />
            <div className="font-['Liberation_Sans',sans-serif]">
              <h2 className="pt-[54px] text-[57px] font-bold leading-[68px]">Charging Facilities Near Your Search</h2>
              <ul className="pt-12">
                {facilities.map((f, i) => (
                  <li key={i} className="mb-24 text-[32px] leading-[46px]">
                    <h3 className="font-bold">{f.name}</h3>
                    <p>{f.address}</p>
                  </li>
                ))}
              </ul>
            </div>
          </div>
        </main>
      </div>
    </div>
  );
}
